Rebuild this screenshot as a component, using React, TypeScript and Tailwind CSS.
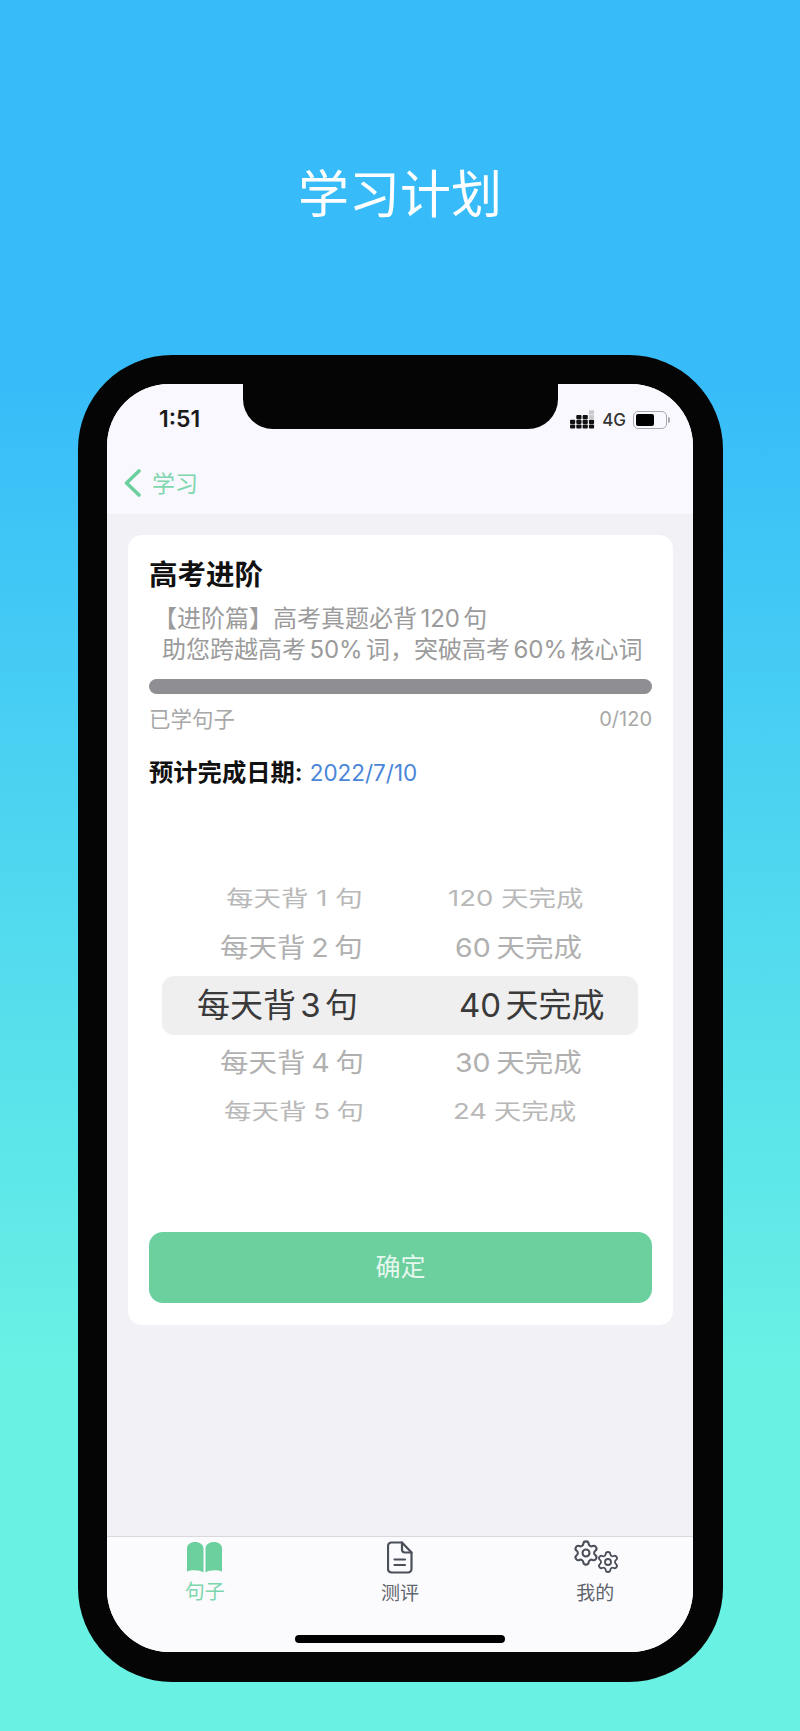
import React from 'react';
import { Settings } from 'lucide-react';

const font = '[font-family:Inter,"Noto_Sans_CJK_SC",sans-serif]';

const pickerRows = [
  { h: 'h-[48px]', wrap: 'text-[#b8b8b8] text-[27.5px] scale-y-[.78]', left: 'pl-[64px]', right: 'pl-[50px]', a: '每天背 1 句', b: '120 天完成' },
  { h: 'h-[50px] mb-[3px]', wrap: 'text-[#b0b0b0] text-[28.5px] scale-y-[.92] [word-spacing:-0.08em]', left: 'pl-[58px]', right: 'pl-[57px]', a: '每天背 2 句', b: '60 天完成' },
  { h: 'h-[59px] bg-[#efefef] rounded-[12px]', wrap: 'text-[#3a3a3a] text-[33px] [word-spacing:-0.15em]', left: 'pl-[35px]', right: 'pl-[61px]', a: '每天背 3 句', b: '40 天完成' },
  { h: 'h-[56px]', wrap: 'text-[#b0b0b0] text-[28.5px] scale-y-[.92] [word-spacing:-0.08em]', left: 'pl-[58px]', right: 'pl-[57px]', a: '每天背 4 句', b: '30 天完成' },
  { h: 'h-[42px]', wrap: 'text-[#b8b8b8] text-[27.5px] scale-y-[.78] [word-spacing:-0.04em]', left: 'pl-[62px]', right: 'pl-[55px]', a: '每天背 5 句', b: '24 天完成' },
];

function SignalIcon() {
  const cols = [
    [0, 1],
    [0, 1, 2],
    [0, 1, 2],
    [0, 1, 2, 3],
  ];
  return (
    <svg width="25" height="19" viewBox="0 0 25 19">
      {cols.map((col, i) =>
        col.map((r) => (
          <rect
            key={`${i}-${r}`}
            x={i * 6.3}
            y={14.4 - r * 4.7}
            width="5.2"
            height="4.2"
            rx="1"
            fill={i === 3 && r > 1 ? '#c9c9cc' : '#111'}
          />
        )),
      )}
    </svg>
  );
}

function BatteryIcon() {
  return (
    <div className="flex items-center gap-[1px]">
      <div className="w-[34px] h-[18px] rounded-[5px] border-[1.5px] border-[#a9a9ad] p-[2px]">
        <div className="w-[18px] h-full rounded-[2px] bg-black" />
      </div>
      <div className="w-[2px] h-[6px] rounded-r-full bg-[#a9a9ad]" />
    </div>
  );
}

function BackIcon() {
  return (
    <svg width="17" height="28" viewBox="0 0 17 28" fill="none" stroke="#6ccf9e" strokeWidth="3.6" strokeLinecap="round" strokeLinejoin="round">
      <path d="M15 2L2.5 14L15 26" />
    </svg>
  );
}

function BookIcon() {
  return (
    <svg width="35" height="31" viewBox="0 0 35 31" fill="#6ccf9e">
      <path d="M0 29V6.5C0 2.5 3.5 0 8 0C12.5 0 16.5 2.5 16.5 6.5V30.5C13 28 5 27.5 0 29.5Z" />
      <path d="M35 29V6.5C35 2.5 31.5 0 27 0C22.5 0 18.5 2.5 18.5 6.5V30.5C22 28 30 27.5 35 29.5Z" />
    </svg>
  );
}

function DocIcon() {
  return (
    <svg width="26" height="33" viewBox="0 0 26 33" fill="none" stroke="#4a4f59" strokeWidth="2.2" strokeLinecap="round" strokeLinejoin="round">
      <path d="M4.5 1.5H15L24.5 11.5V28a3.5 3.5 0 0 1-3.5 3.5H4.5A3.5 3.5 0 0 1 1 28V5a3.5 3.5 0 0 1 3.5-3.5Z" />
      <path d="M15 1.5V8.5a3 3 0 0 0 3 3H24.5" />
      <path d="M7.5 18.5H18M7.5 24H18" />
    </svg>
  );
}

export default function App() {
  return (
    <div className={`${font} w-[800px] h-[1731px] overflow-hidden bg-linear-to-b from-[#38bcf9] from-[22%] to-[#69f2e3] to-[80%]`}>
      <h1 className="pt-[162px] h-[355px] text-center text-white text-[51px] leading-[66px] font-normal">学习计划</h1>

      {/* phone */}
      <div className="ml-[78px] w-[645px] h-[1327px] rounded-[94px] bg-[#050505] pt-[29px] pl-[29px]">
        <div className="relative w-[586px] h-[1268px] rounded-[62px] overflow-hidden bg-[#f1f1f6] flex flex-col">
          {/* notch */}
          <div className="absolute top-0 left-[136px] w-[315px] h-[45px] rounded-b-[30px] bg-[#050505]" />

          {/* status + nav */}
          <div className="h-[130px] bg-[#f8f8fe] shrink-0">
            <div className="h-[60px] pt-[23px] pl-[52px] pr-[23px] flex items-start justify-between">
              <span className="text-[23px] leading-[24px] font-semibold text-[#1a1a1a]">1:51</span>
              <div className="flex items-center gap-[7px] pt-[3px]">
                <SignalIcon />
                <span className="text-[17px] leading-[18px] font-medium text-[#333]">4G</span>
                <BatteryIcon />
              </div>
            </div>
            <div className="h-[70px] pl-[17px] pt-[25px] flex items-start">
              <BackIcon />
              <span className="text-[23px] leading-[30px] text-[#7fd6ae] ml-[11px]">学习</span>
            </div>
          </div>

          {/* content */}
          <div className="flex-1 px-[21px] pt-[21px]">
            <div className="w-[545px] h-[790px] bg-white rounded-[14px] px-[21px] pt-[20px]">
              <div className="text-[28.5px] leading-[40px] font-semibold text-[#111]">高考进阶</div>
              <div className="mt-[8px] text-[24px] leading-[31px] text-[#9b9b9b] [word-spacing:-0.14em]">
                <div className="pl-[4px] whitespace-nowrap">【进阶篇】高考真题必背 120 句</div>
                <div className="pl-[13px] whitespace-nowrap">助您跨越高考 50% 词，突破高考 60% 核心词</div>
              </div>
              <div className="mt-[14px] h-[15px] rounded-full bg-[#8e8e93]" />
              <div className="mt-[10px] flex justify-between text-[21.5px] leading-[30px] text-[#a8a8a8]">
                <span>已学句子</span>
                <span className="text-[20px]">0/120</span>
              </div>
              <div className="mt-[21px] h-[34px] text-[24.3px] leading-[34px] font-semibold text-[#111] whitespace-nowrap">
                预计完成日期: <span className="ml-[1px] text-[22.5px] font-normal text-[#4a86d8]">2022/7/10</span>
              </div>

              {/* picker */}
              <div className="mt-[86px] ml-[13px] w-[476px] flex flex-col">
                {pickerRows.map((row) => (
                  <div key={row.a} className={`${row.h} flex items-center`}>
                    <div className={`w-[236px] whitespace-nowrap ${row.left} ${row.wrap}`}>{row.a}</div>
                    <div className={`w-[240px] whitespace-nowrap ${row.right} ${row.wrap}`}>{row.b}</div>
                  </div>
                ))}
              </div>

              <button className="mt-[99px] w-full h-[71px] rounded-[14px] bg-[#6ccf9e] text-[25px] text-[#e6f7ee]">确定</button>
            </div>
          </div>

          {/* tabs */}
          <div className="relative h-[116px] shrink-0 bg-[#fbfbfd] border-t border-[#d9d9dd] grid grid-cols-3">
            <div className="flex flex-col items-center pt-[5px]">
              <BookIcon />
              <span className="mt-[6px] text-[20px] leading-[26px] text-[#7bd6ab]">句子</span>
            </div>
            <div className="flex flex-col items-center pt-[4px]">
              <DocIcon />
              <span className="mt-[7px] text-[19px] leading-[26px] text-[#5f646d]">测评</span>
            </div>
            <div className="flex flex-col items-center pt-[2px]">
              <div className="h-[35px] flex text-[#4a4f59] pl-[2px]">
                <Settings size={28} strokeWidth={1.8} className="self-start" />
                <Settings size={24} strokeWidth={1.8} className="self-end -ml-[4px]" />
              </div>
              <span className="mt-[7px] text-[19px] leading-[26px] text-[#5f646d]">我的</span>
            </div>
            <div className="absolute left-[188px] bottom-[9px] w-[210px] h-[8px] rounded-full bg-black" />
          </div>
        </div>
      </div>
    </div>
  );
}
